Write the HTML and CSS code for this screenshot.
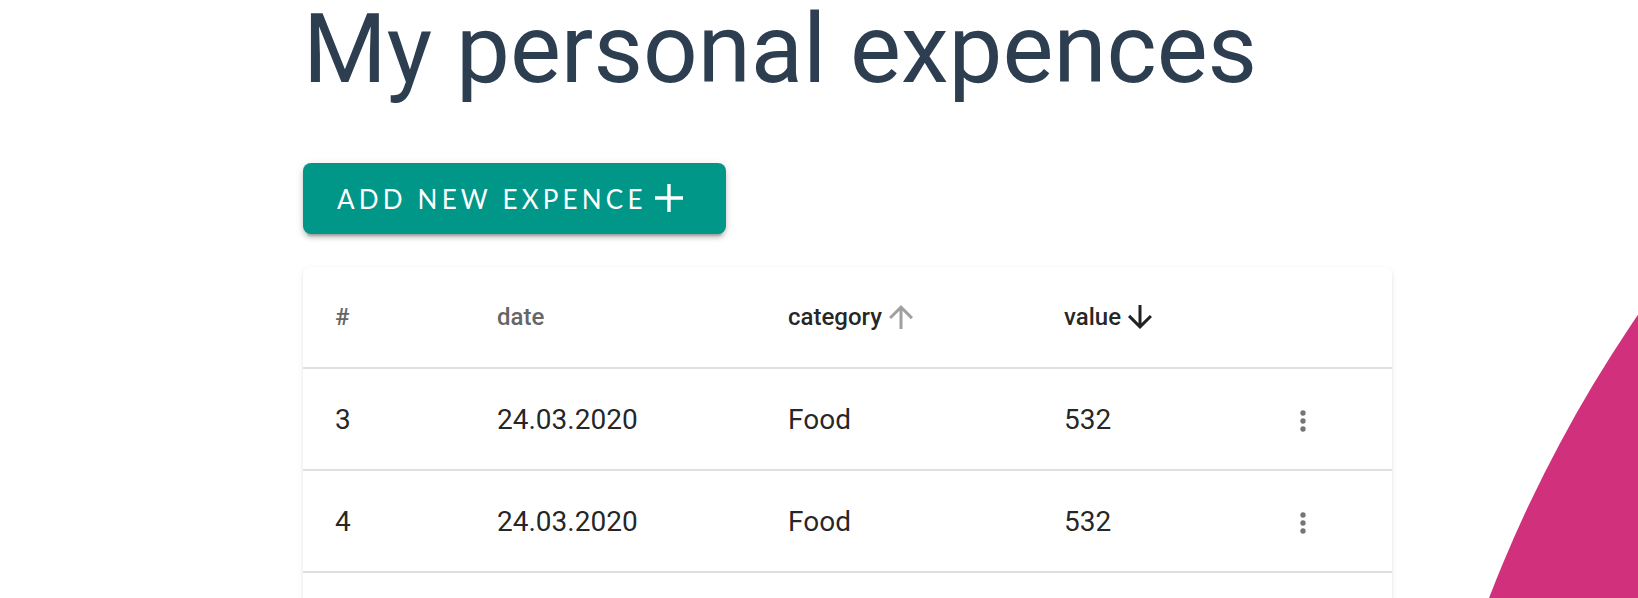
FILE: index.html
```html
<!DOCTYPE html>
<html lang="en">
<head>
<meta charset="utf-8">
<title>My personal expences</title>
<link rel="stylesheet" href="styles.css">
</head>
<body>
<div class="blob"></div>
<main class="page">
  <h1 class="title">My personal expences</h1>
  <button class="add-btn" type="button">
    <span class="add-label">ADD NEW EXPENCE</span>
    <svg class="add-icon" viewBox="0 0 28 28" aria-hidden="true"><path d="M14 0v28M0 14h28" stroke="currentColor" stroke-width="3.4" fill="none"/></svg>
  </button>
  <section class="card">
    <div class="row head">
      <div class="cell muted">#</div>
      <div class="cell muted">date</div>
      <div class="cell">category<svg class="sort-icon inactive" viewBox="0 0 24 24"><path d="M4 12l1.41 1.41L11 7.83V20h2V7.83l5.58 5.59L20 12l-8-8-8 8z"/></svg></div>
      <div class="cell">value<svg class="sort-icon" viewBox="0 0 24 24"><path d="M20 12l-1.41-1.41L13 16.17V4h-2v12.17l-5.58-5.59L4 12l8 8 8-8z"/></svg></div>
      <div class="cell"></div>
    </div>
    <div class="row">
      <div class="cell">3</div>
      <div class="cell">24.03.2020</div>
      <div class="cell">Food</div>
      <div class="cell">532</div>
      <div class="cell"><svg class="more" viewBox="0 0 24 24"><circle cx="12" cy="6" r="2"/><circle cx="12" cy="12" r="2"/><circle cx="12" cy="18" r="2"/></svg></div>
    </div>
    <div class="row">
      <div class="cell">4</div>
      <div class="cell">24.03.2020</div>
      <div class="cell">Food</div>
      <div class="cell">532</div>
      <div class="cell"><svg class="more" viewBox="0 0 24 24"><circle cx="12" cy="6" r="2"/><circle cx="12" cy="12" r="2"/><circle cx="12" cy="18" r="2"/></svg></div>
    </div>
    <div class="row">
      <div class="cell">5</div>
      <div class="cell">24.03.2020</div>
      <div class="cell">Food</div>
      <div class="cell">532</div>
      <div class="cell"><svg class="more" viewBox="0 0 24 24"><circle cx="12" cy="6" r="2"/><circle cx="12" cy="12" r="2"/><circle cx="12" cy="18" r="2"/></svg></div>
    </div>
  </section>
</main>
</body>
</html>
```
FILE: styles.css
```css
html, body {
  margin: 0;
  padding: 0;
  background: #fff;
}
body {
  width: 1638px;
  height: 598px;
  overflow: hidden;
  position: relative;
  font-family: Roboto, "Liberation Sans", sans-serif;
  color: #2c3e50;
}
.blob {
  position: absolute;
  left: 1397px;
  top: -284px;
  width: 2754px;
  height: 2754px;
  border-radius: 50%;
  background: #d0307c;
  z-index: 0;
}
.page {
  position: relative;
  z-index: 1;
  padding-left: 303px;
  width: 1089px;
  display: flex;
  flex-direction: column;
  align-items: flex-start;
}
.title {
  margin: 1px 0 0 0;
  font-size: 96px;
  line-height: 96px;
  font-weight: 400;
  color: #2c3e50;
  letter-spacing: 0;
}
.add-btn {
  margin-top: 66px;
  height: 71px;
  width: 423px;
  padding: 0 0 0 34px;
  border: 0;
  border-radius: 8px;
  background: #009688;
  color: #fff;
  display: flex;
  align-items: center;
  font-family: Lato, "Open Sans", sans-serif;
  font-size: 26px;
  font-weight: 400;
  letter-spacing: 4.2px;
  box-shadow: 0 6px 2px -4px rgba(0,0,0,.2), 0 4px 4px 0 rgba(0,0,0,.14), 0 2px 10px 0 rgba(0,0,0,.12);
}
.add-icon {
  width: 28px;
  height: 28px;
  margin-left: 8px;
  margin-top: -1px;
}
.card {
  margin-top: 33px;
  width: 1089px;
  background: #fff;
  border-radius: 8px;
  box-shadow: 0 4px 2px -2px rgba(0,0,0,.12), 0 2px 2px 0 rgba(0,0,0,.08), 0 2px 6px 0 rgba(0,0,0,.08);
}
.row {
  display: grid;
  grid-template-columns: 162px 291px 276px 224px 1fr;
  height: 102px;
  box-sizing: border-box;
  border-bottom: 2px solid #e0e0e0;
  font-size: 28px;
  color: rgba(0,0,0,.87);
}
.row.head {
  font-size: 24px;
  font-weight: 500;
}
.cell {
  padding: 0 32px;
  display: flex;
  align-items: center;
}
.muted {
  color: #666;
}
.sort-icon {
  width: 36px;
  height: 36px;
  margin-left: 1px;
  fill: #222;
}
.sort-icon.inactive {
  fill: #a0a0a0;
}
.more {
  width: 32px;
  height: 32px;
  margin-top: 3px;
  margin-left: -1px;
  fill: #757575;
}
```
